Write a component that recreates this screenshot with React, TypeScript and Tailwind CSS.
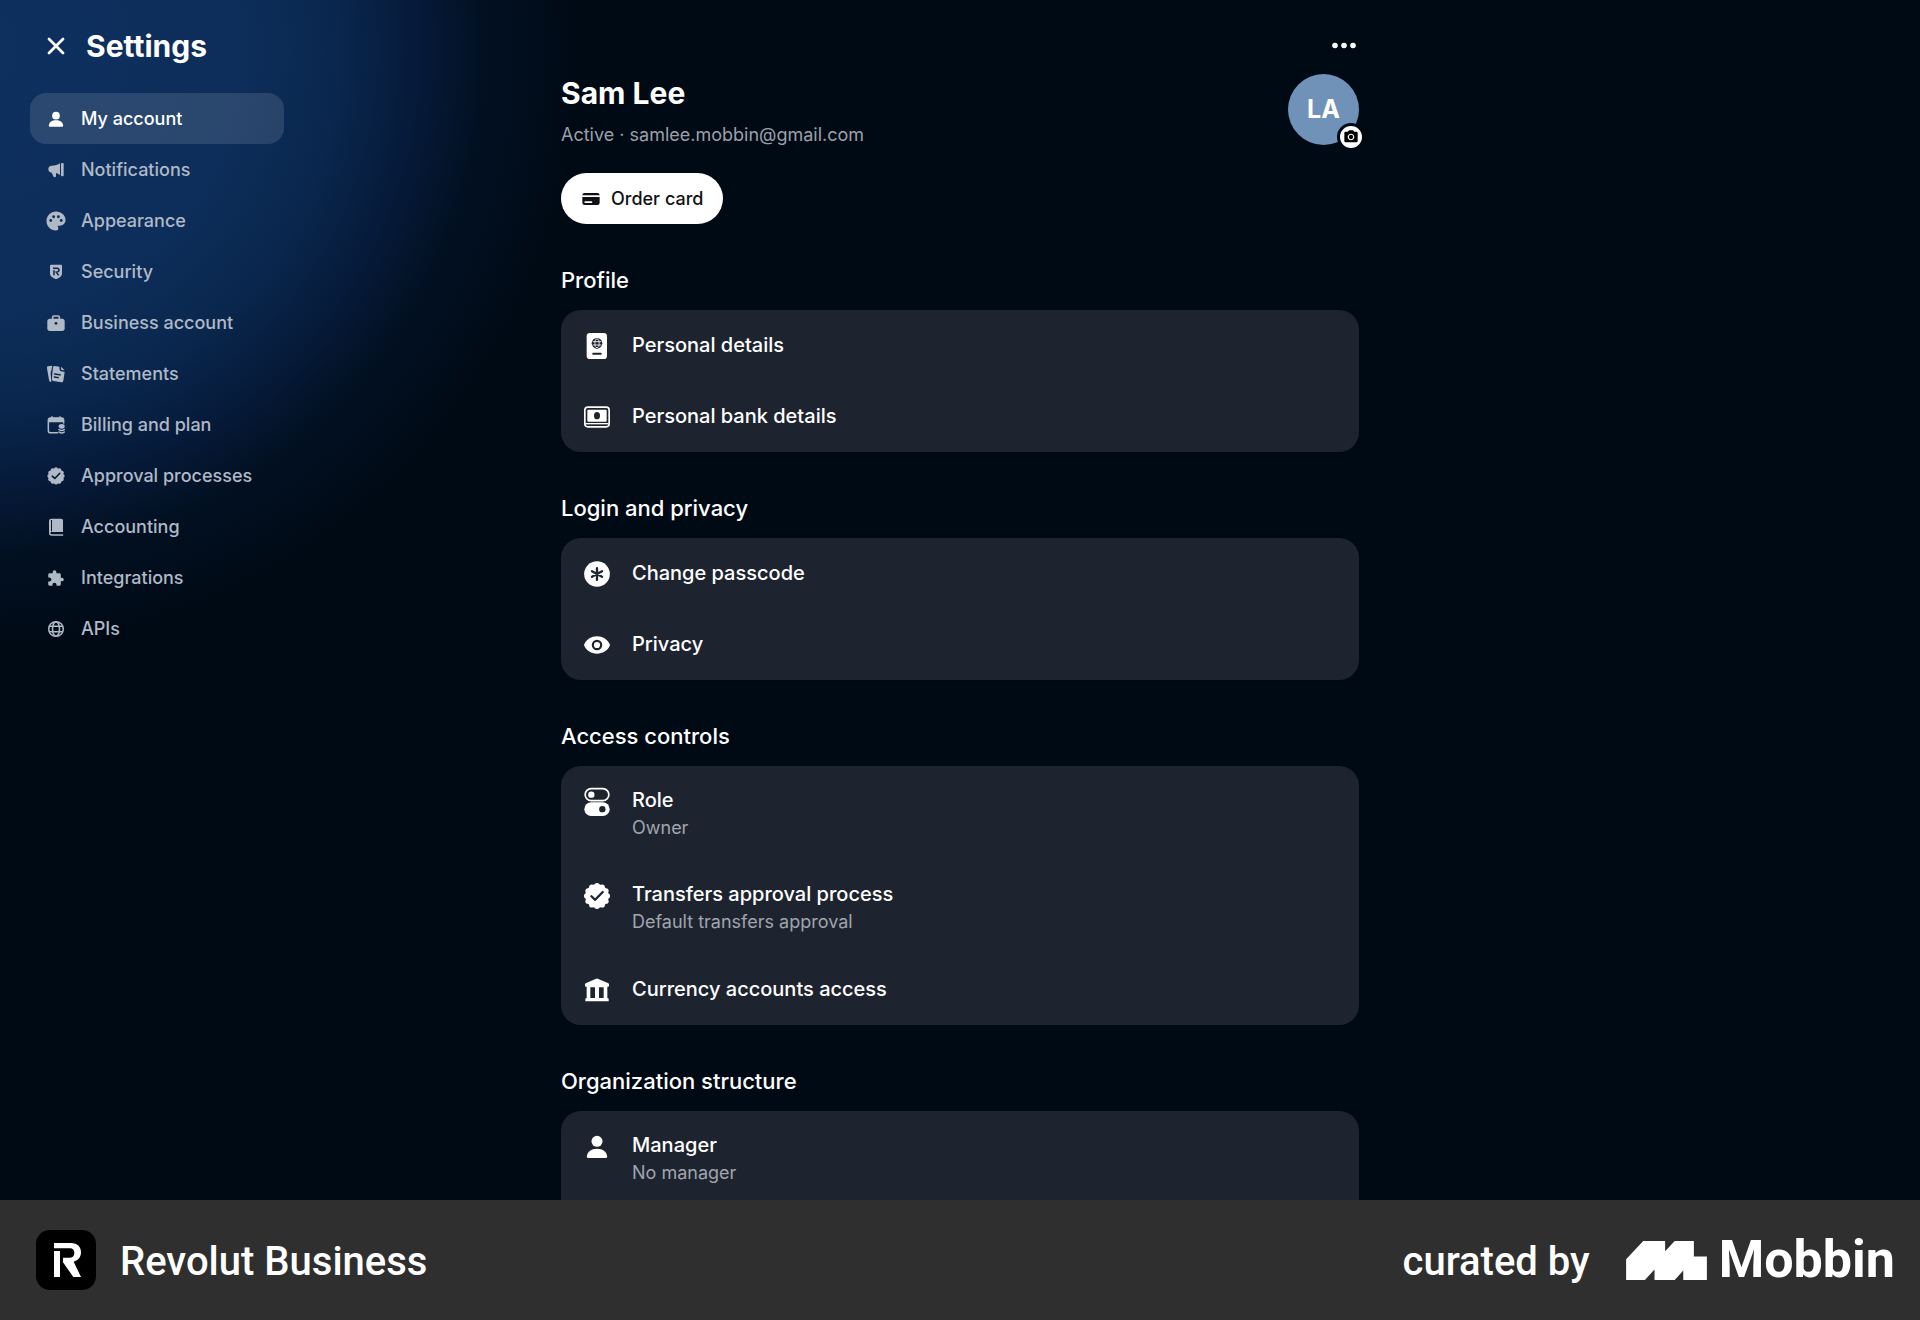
import React from "react";
import { MdExtension, MdPalette, MdPhotoCamera } from "react-icons/md";

function Small({ children }: { children: React.ReactNode }) {
  return (
    <svg viewBox="0 0 60 60" className="size-5 shrink-0" fill="currentColor" aria-hidden="true">
      {children}
    </svg>
  );
}

function Large({ children }: { children: React.ReactNode }) {
  return (
    <svg viewBox="0 0 90 90" className="size-[30px] shrink-0" fill="currentColor" aria-hidden="true">
      {children}
    </svg>
  );
}

const CARD_INK = "#1e242f";

function Seal({ c, r, ink }: { c: number; r: number; ink: string }) {
  const lobes = Array.from({ length: 12 }, (_, i) => (i * Math.PI) / 6);
  return (
    <>
      <circle cx={c} cy={c} r={r * 0.9} />
      {lobes.map((a) => (
        <circle key={a} cx={c + Math.cos(a) * r * 0.79} cy={c + Math.sin(a) * r * 0.79} r={r * 0.21} />
      ))}
      <path
        d={`M${c - r * 0.43} ${c + r * 0.02} L${c - r * 0.14} ${c + r * 0.29} L${c + r * 0.44} ${c - r * 0.31}`}
        fill="none"
        stroke={ink}
        strokeWidth={r * 0.18}
        strokeLinecap="round"
        strokeLinejoin="round"
      />
    </>
  );
}

const UserIcon = () => (
  <Small>
    <circle cx="30" cy="20" r="11.500" />
    <path d="M8.500 50 C9 39 19 34 30 34 S51 39 51.500 50 Q51.500 53 48.500 53 H11.500 Q8.500 53 8.500 50Z" />
  </Small>
);

const MegaphoneIcon = () => (
  <Small>
    <path d="M7 28 Q7 17 17 17 C27 17 36 14 42 10 V45 C38 42 34 40 30 39 V48 Q30 52 26 52 Q23 52 22 49 L17 38 Q7 37 7 28Z" />
    <rect x="45" y="9" width="8" height="40" rx="3" />
  </Small>
);

const PaletteIcon = () => <MdPalette viewBox="1.500 1.500 21 21" className="size-5 shrink-0" aria-hidden="true" />;

const ShieldIcon = () => (
  <Small>
    <path d="M15 8 H45 Q48 8 48 11 V36 Q48 44 30 52 Q12 44 12 36 V11 Q12 8 15 8Z" />
    <path d="M21 19 H33 Q39 19 39 25 Q39 30 31 30.500 L38 40 M24 25 V40" fill="none" stroke="#0b2a54" strokeWidth="4.500" />
  </Small>
);

const BriefcaseIcon = () => (
  <Small>
    <path d="M20 18 V13 Q20 9 24 9 H36 Q40 9 40 13 V18" fill="none" stroke="currentColor" strokeWidth="5" />
    <rect x="4" y="17" width="52" height="37" rx="8" />
    <circle cx="30" cy="31" r="4" fill="#0a2547" />
  </Small>
);

const StatementsIcon = () => (
  <Small>
    <path d="M5 7 L19 5 L14 28 L16 54 Q10 55 9 48 L3 13 Q2.500 8 5 7Z" />
    <path d="M26 6 L40 8 L41 18 Q42 22 46 22 L56 24 L52 50 Q51 55 46 54.500 L22 51 Q17 50 17.500 45 L21 10 Q22 5.500 26 6Z" />
    <path d="M45 8 L56 19 L48 18 Q45 17.500 45 14Z" />
    <path d="M26 30 L43 32.500 M25 39 L37 41" stroke="#07203f" strokeWidth="4" strokeLinecap="round" />
  </Small>
);

const CalendarIcon = () => (
  <Small>
    <path d="M35 53.500 H14 Q7 53.500 7 47 V16 Q7 9 14 9 H46 Q53 9 53 16 V24" fill="none" stroke="currentColor" strokeWidth="4.500" strokeLinecap="round" />
    <path d="M6 22 V15 Q6 8 13 8 H47 Q54 8 54 15 V22Z" />
    <rect x="15" y="4" width="6" height="8" rx="3" />
    <rect x="39" y="4" width="6" height="8" rx="3" />
    <ellipse cx="47" cy="34" rx="9" ry="7" />
    <path d="M39 43.500 Q47 49.500 55 43.500 M39 51 Q47 57 55 51" fill="none" stroke="currentColor" strokeWidth="4.500" strokeLinecap="round" />
  </Small>
);

const ApprovalIcon = () => (
  <Small>
    <Seal c={30} r={26} ink="#051831" />
  </Small>
);

const BookIcon = () => (
  <Small>
    <path d="M16 5 H46 Q51 5 51 10 V44 H16 Q9 44 9 49 V12 Q9 5 16 5Z" />
    <path d="M11 49 Q11 43 17 43 H49 M11 49 Q11 54 17 54 H50" fill="none" stroke="currentColor" strokeWidth="4" strokeLinecap="round" />
    <path d="M16.500 9 V43" stroke="#03101f" strokeWidth="3" />
  </Small>
);

const PuzzleIcon = () => <MdExtension viewBox="-1 -2 27 27" className="size-5 shrink-0" aria-hidden="true" />;

const GlobeIcon = () => (
  <Small>
    <g fill="none" stroke="currentColor" strokeWidth="4.500">
      <circle cx="30" cy="30" r="22" />
      <ellipse cx="30" cy="30" rx="10.500" ry="22" />
      <path d="M10 22 H50 M10 38 H50" />
    </g>
  </Small>
);

const PassportIcon = () => (
  <Large>
    <rect x="14" y="6" width="61" height="78" rx="10" />
    <circle cx="45" cy="37" r="16" fill={CARD_INK} />
    <g fill="none" stroke="#fff" strokeWidth="2.500">
      <ellipse cx="45" cy="37" rx="6.500" ry="13" />
      <path d="M32 32 H58 M32 42 H58" />
    </g>
    <rect x="31" y="65" width="28" height="6" rx="2" fill={CARD_INK} />
  </Large>
);

const CashIcon = () => (
  <Large>
    <rect x="8.500" y="15.500" width="73" height="59" rx="9" fill="none" stroke="currentColor" strokeWidth="5" />
    <rect x="16" y="23" width="58" height="36" rx="3" />
    <path d="M10 65 H80" stroke="currentColor" strokeWidth="4" />
    <ellipse cx="45" cy="41" rx="9" ry="11" fill={CARD_INK} />
  </Large>
);

const PasscodeIcon = () => (
  <Large>
    <circle cx="45" cy="45" r="38.500" />
    <path
      d="M45 27.500 V62.500 M30 36.500 L60 53.500 M60 36.500 L30 53.500"
      stroke={CARD_INK}
      strokeWidth="7"
      strokeLinecap="round"
    />
  </Large>
);

const EyeIcon = () => (
  <Large>
    <path d="M7 42 C14 28 28 19 45 19 S76 28 83 42 Q84.500 45 83 48 C76 62 62 71 45 71 S14 62 7 48 Q5.500 45 7 42Z" />
    <circle cx="45" cy="45" r="12.500" fill="none" stroke={CARD_INK} strokeWidth="6.500" />
  </Large>
);

const TogglesIcon = () => (
  <Large>
    <rect x="9.500" y="5" width="71" height="36" rx="18" fill="none" stroke="currentColor" strokeWidth="5" />
    <circle cx="28" cy="23" r="9.500" />
    <rect x="7" y="46" width="76" height="41" rx="20.500" />
    <circle cx="61" cy="66.500" r="9.500" fill={CARD_INK} />
  </Large>
);

const SealIcon = () => (
  <Large>
    <Seal c={45} r={39} ink={CARD_INK} />
  </Large>
);

const BankIcon = () => (
  <Large>
    <path d="M42.500 11 Q45 10 47.500 11 L79 25 Q81 26 81 28 V32 Q81 35 78 35 H76 V70 H78 Q80 70 80 72 V79 H10 V72 Q10 70 12 70 H14 V35 H12 Q9 35 9 32 V28 Q9 26 11 25Z" />
    <path d="M25 37 H39 V69 H25Z M51 37 H65 V69 H51Z" fill={CARD_INK} />
  </Large>
);

const ManagerIcon = () => (
  <Large>
    <circle cx="45" cy="28" r="16.500" />
    <path d="M14.500 74 C15 59 28 50 45 50 S75 59 75.500 74 Q75.500 78 71.500 78 H18.500 Q14.500 78 14.500 74Z" />
  </Large>
);

const CreditCardIcon = () => (
  <Small>
    <path d="M4 19 Q4 12 11 12 H49 Q56 12 56 19Z" />
    <path
      fillRule="evenodd"
      d="M4 24 H56 V41 Q56 48 49 48 H11 Q4 48 4 41Z M12 37 Q10 37 10 39 Q10 42 13 42 H31 Q34 42 34 39 Q34 37 32 37Z"
    />
  </Small>
);

const NAV = [
  { label: "My account", icon: UserIcon, current: true },
  { label: "Notifications", icon: MegaphoneIcon },
  { label: "Appearance", icon: PaletteIcon },
  { label: "Security", icon: ShieldIcon },
  { label: "Business account", icon: BriefcaseIcon },
  { label: "Statements", icon: StatementsIcon },
  { label: "Billing and plan", icon: CalendarIcon },
  { label: "Approval processes", icon: ApprovalIcon },
  { label: "Accounting", icon: BookIcon },
  { label: "Integrations", icon: PuzzleIcon },
  { label: "APIs", icon: GlobeIcon },
];

type Row = { label: string; detail?: string; icon: React.ComponentType };

const SECTIONS: { title: string; rows: Row[] }[] = [
  {
    title: "Profile",
    rows: [
      { label: "Personal details", icon: PassportIcon },
      { label: "Personal bank details", icon: CashIcon },
    ],
  },
  {
    title: "Login and privacy",
    rows: [
      { label: "Change passcode", icon: PasscodeIcon },
      { label: "Privacy", icon: EyeIcon },
    ],
  },
  {
    title: "Access controls",
    rows: [
      { label: "Role", detail: "Owner", icon: TogglesIcon },
      { label: "Transfers approval process", detail: "Default transfers approval", icon: SealIcon },
      { label: "Currency accounts access", icon: BankIcon },
    ],
  },
  {
    title: "Organization structure",
    rows: [{ label: "Manager", detail: "No manager", icon: ManagerIcon }],
  },
];

function Sidebar() {
  return (
    <aside className="pt-6 pl-[30px]">
      <header className="flex h-11 items-center gap-5 pl-4">
        <button type="button" aria-label="Close settings" className="flex size-5 items-center justify-center">
          <svg viewBox="0 0 20 20" className="size-5" fill="none" stroke="currentColor" strokeWidth="2.800" strokeLinecap="round">
            <path d="M3 3 L17 17 M17 3 L3 17" />
          </svg>
        </button>
        <h1 className="text-[30px] font-bold">Settings</h1>
      </header>
      <nav aria-label="Settings" className="mt-[25px] flex w-[254px] flex-col">
        {NAV.map(({ label, icon: Icon, current }) => (
          <a
            key={label}
            href="#"
            aria-current={current ? "page" : undefined}
            className={
              current
                ? "flex h-[51px] items-center gap-[15px] rounded-2xl bg-white/12 px-4 text-lg font-medium text-white"
                : "flex h-[51px] items-center gap-[15px] rounded-2xl px-4 text-lg font-medium text-[#b0b9c6]"
            }
          >
            <Icon />
            {label}
          </a>
        ))}
      </nav>
    </aside>
  );
}

function SettingsRow({ label, detail, icon: Icon }: Row) {
  return (
    <li>
      <a href="#" className="flex items-start gap-5 px-[21px] py-5">
        <span className="flex h-[31px] items-center">
          <Icon />
        </span>
        {detail ? (
          <span className="flex flex-col">
            <span className="text-xl leading-[29px] font-medium">{label}</span>
            <span className="text-lg leading-[25px] text-[#a0a5ae]">{detail}</span>
          </span>
        ) : (
          <span className="text-xl leading-[31px] font-medium">{label}</span>
        )}
      </a>
    </li>
  );
}

function Account() {
  return (
    <main className="pt-[35px]">
      <div className="flex justify-end">
        <button type="button" aria-label="More options" className="flex h-5 w-[30px] items-center justify-center">
          <svg viewBox="0 0 30 20" className="h-5 w-[30px]" fill="currentColor">
            <circle cx="6" cy="10.500" r="2.800" />
            <circle cx="15" cy="10.500" r="2.800" />
            <circle cx="24" cy="10.500" r="2.800" />
          </svg>
        </button>
      </div>

      <div className="mt-[19px] flex justify-between">
        <div>
          <h2 className="text-[30px] leading-[38px] font-bold">Sam Lee</h2>
          <p className="mt-[10px] text-lg leading-[26px] text-[#9aa0aa]">Active · samlee.mobbin@gmail.com</p>
        </div>
        <div className="relative size-[71px]">
          <div className="flex size-full items-center justify-center rounded-full bg-[#7092b9] text-[25px] font-bold">
            LA
          </div>
          <button
            type="button"
            aria-label="Change photo"
            className="absolute -right-[6px] -bottom-[6px] flex size-7 items-center justify-center rounded-full border-3 border-[#000a15] bg-white text-black"
          >
            <MdPhotoCamera className="size-4" />
          </button>
        </div>
      </div>

      <button
        type="button"
        className="mt-[25px] flex h-[51px] items-center gap-[10px] rounded-full bg-white px-5 text-lg font-medium text-[#101114]"
      >
        <CreditCardIcon />
        Order card
      </button>

      {SECTIONS.map(({ title, rows }) => (
        <section key={title} className="pt-10">
          <h3 className="text-[22px] leading-8 font-medium">{title}</h3>
          <ul className="mt-[14px] rounded-[20px] bg-[#1e242f] in-[section:last-child]:pb-5">
            {rows.map((row) => (
              <SettingsRow key={row.label} {...row} />
            ))}
          </ul>
        </section>
      ))}
    </main>
  );
}

function Footer() {
  return (
    <footer className="flex h-[120px] shrink-0 items-center justify-between bg-[#2f2f2f] pr-[25px] pl-9 font-['Roboto',sans-serif] text-white">
      <div className="flex items-center gap-6">
        <svg viewBox="108 120 180 180" className="size-[60px]" role="img" aria-label="Revolut">
          <rect x="108" y="120" width="180" height="180" rx="42" fill="#000" />
          <rect x="162" y="183" width="18" height="78" fill="#fff" />
          <path
            d="M162 159 H213 C232 159 243 170 243 187 C243 201 235 211 221 215 L243 261 H220 L189 217 V203 H211 C219 203 223 197 223 189 C223 180 218 175 211 175 H162Z"
            fill="#fff"
          />
        </svg>
        <span className="pt-1 text-[40px] font-medium">Revolut Business</span>
      </div>
      <div className="flex items-center gap-9">
        <span className="pt-1 text-[40px] font-medium">curated by</span>
        <div className="flex items-center gap-3">
          <svg viewBox="716 150 236 114" className="h-[39px] w-[81px]" fill="#fff" aria-hidden="true">
            <path d="M766 150 H830 V180 L858 150 H914 V195 H952 V264 H883 V236 L858 264 H799 V233 L771 264 H716 V203Z" />
          </svg>
          <span className="text-[52px] leading-none font-bold">Mobbin</span>
        </div>
      </div>
    </footer>
  );
}

export default function App() {
  return (
    <div className="flex h-screen flex-col bg-[#000a15] font-['Inter',sans-serif] text-white">
      <div className="grid min-h-0 flex-1 grid-cols-[minmax(284px,1fr)_minmax(0,798px)_minmax(0,1fr)] overflow-hidden bg-[radial-gradient(circle_600px_at_-20px_50px,#0e305e_0%,#0d2e5b_42%,#0a284f_58%,#061b3b_72%,#021022_84%,#000a15_100%)]">
        <Sidebar />
        <Account />
      </div>
      <Footer />
    </div>
  );
}
